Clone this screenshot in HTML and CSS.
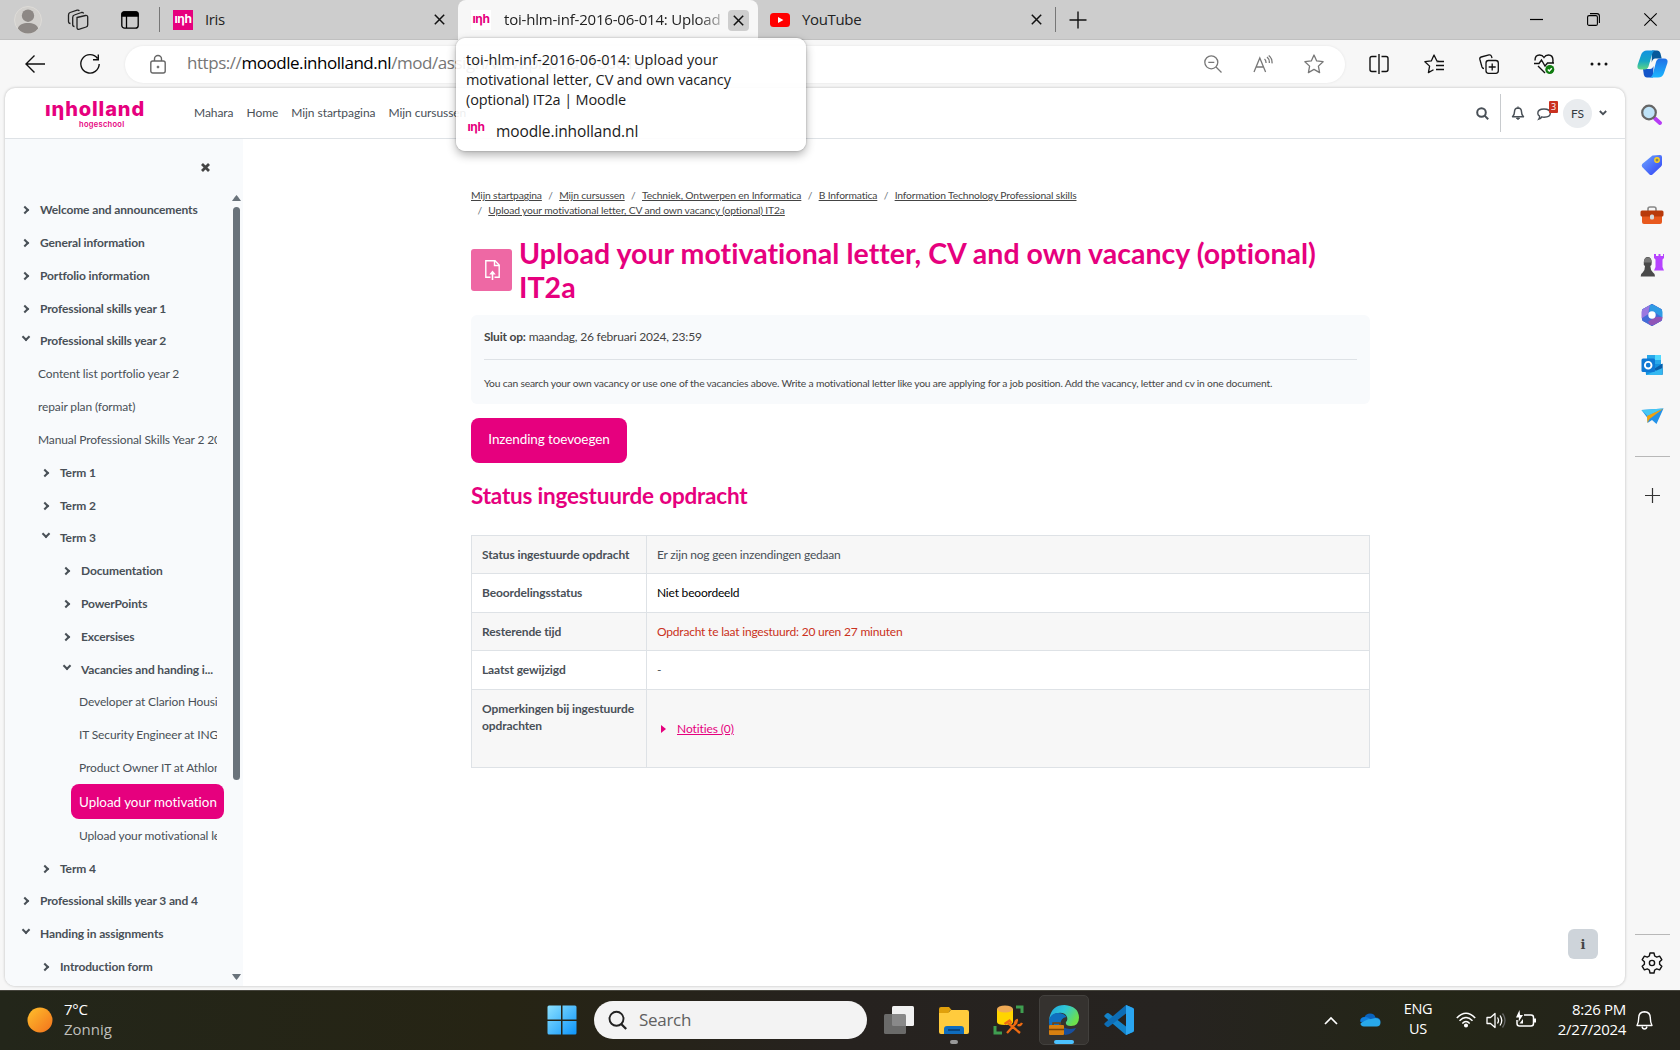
FILE: index.html
```html
<!DOCTYPE html>
<html lang="nl">
<head>
<meta charset="utf-8">
<title>toi-hlm-inf-2016-06-014: Upload your motivational letter</title>
<link rel="stylesheet" href="styles.css">
</head>
<body>
<div class="screen">
  <header class="tabs">
    <svg class="ic avatar" width="28" height="28" viewBox="0 0 28 28"><circle cx="14" cy="14" r="13.5" fill="#d2d0cd" stroke="#dedcd8"/><circle cx="14" cy="9.7" r="6.2" fill="#8d8885"/><path d="M3.8 22.500C5 18.500 9 17 14 17s9 1.500 10.200 5.500A13 13 0 0 1 3.800 22.500z" fill="#8d8885"/></svg>
    <svg class="ic spaces" width="22" height="22" viewBox="0 0 22 22" fill="none" stroke="#222" stroke-width="1.300"><path d="M10 8.500l8.500-2q2.200-.3 2.200 1.500v8q0 1.500-1.500 2l-6.700 2.200q-2.300.5-2.500-1.500z"/><path d="M7.500 17.500q-1.800 0-1.800-2V8.500q0-2 1.700-2.500l7-2.500q1.600-.4 2.200 1"/><path d="M3.500 14.500q-2 0-2-2V6q0-2 1.600-2.500l7-2.300q1.600-.4 2.200.8"/></svg>
    <svg class="ic tabact" width="18" height="18" viewBox="0 0 18 18" fill="none" stroke="#000" stroke-width="1.300"><rect x=".8" y=".8" width="16.400" height="16.400" rx="2.800"/><path d="M1 5V3q0-2 2-2h12q2 0 2 2v2z" fill="#000"/><path d="M5.500 5v12"/></svg>
    <i class="vline"></i>
    <span class="fav pink">ıηh</span>
    <span class="tabname iris">Iris</span>
    <svg class="ic closex" width="11" height="11" viewBox="0 0 11 11"><path d="M.8.8l9.400 9.400M10.200.8L.8 10.200" stroke="#111" stroke-width="1.500"/></svg>
    <div class="tab">
      <span class="fav white">ıηh</span>
      <span class="tabname fade">toi-hlm-inf-2016-06-014: Upload</span>
      <span class="closebtn"><svg width="11" height="11" viewBox="0 0 11 11"><path d="M.8.8l9.400 9.400M10.200.8L.8 10.200" stroke="#111" stroke-width="1.500"/></svg></span>
    </div>
    <svg class="ic yt" width="20" height="14" viewBox="0 0 20 14"><rect width="20" height="14" rx="3.500" fill="#f00"/><path d="M8 4l5.400 3L8 10z" fill="#fff"/></svg>
    <span class="tabname ytname">YouTube</span>
    <svg class="ic" width="11" height="11" viewBox="0 0 11 11"><path d="M.8.8l9.400 9.400M10.200.8L.8 10.200" stroke="#111" stroke-width="1.500"/></svg>
    <i class="vline second"></i>
    <svg class="ic plus" width="18" height="18" viewBox="0 0 18 18"><path d="M9 .5v17M.5 9h17" stroke="#111" stroke-width="1.400"/></svg>
    <div class="winctl">
      <svg width="13" height="13" viewBox="0 0 13 13"><path d="M0 6.500h13" stroke="#000" stroke-width="1.200"/></svg>
      <svg width="13" height="13" viewBox="0 0 13 13" fill="none" stroke="#000" stroke-width="1.100"><rect x=".6" y="2.600" width="9.800" height="9.800" rx="1.500"/><path d="M3 .6h7q2.400 0 2.400 2.400v7"/></svg>
      <svg width="13" height="13" viewBox="0 0 13 13"><path d="M.3.3l12.400 12.400M12.700.3L.3 12.700" stroke="#000" stroke-width="1.100"/></svg>
    </div>
  </header>

  <div class="toolbar">
    <svg class="back" width="20" height="18" viewBox="0 0 20 18" fill="none" stroke="#111" stroke-width="1.400"><path d="M20 9H1M9.500.5L1 9l8.500 8.500"/></svg>
    <svg class="reload" width="20" height="20" viewBox="0 0 20 20" fill="none" stroke="#111" stroke-width="1.400"><path d="M17.500 4.500A9.200 9.200 0 1 0 19.200 10M18.300.5v5.300h-5.300"/></svg>
    <div class="address">
      <svg class="lock" width="16" height="19" viewBox="0 0 16 19" fill="none" stroke="#666" stroke-width="1.400"><rect x=".8" y="6" width="14.400" height="12" rx="2"/><path d="M4.500 6V4a3.500 3.500 0 0 1 7 0v2"/><circle cx="8" cy="12" r="1" fill="#666" stroke-width=".8"/></svg>
      <span class="url">https://<b>moodle.inholland.nl</b>/mod/assign/view.php?id=1806155</span>
      <div class="addr-icons">
        <svg width="18" height="18" viewBox="0 0 18 18" fill="none" stroke="#777" stroke-width="1.300"><circle cx="7.300" cy="7.300" r="6.500"/><path d="M4.300 7.300h6M12 12l5.500 5.500"/></svg>
        <svg width="20" height="18" viewBox="0 0 20 18" fill="none" stroke="#777" stroke-width="1.300"><path d="M1 17L6.800 3 12.600 17M3 12h7.500M11.500 4q1.700 1.300 1.500 4M14 2q2.700 2.200 2.300 6M15.700.4q3.800 3 3.300 8"/></svg>
        <svg width="20" height="20" viewBox="0 0 20 20" fill="none" stroke="#777" stroke-width="1.300" stroke-linejoin="round"><path d="M10 1l2.700 5.900 6.400.8-4.700 4.400 1.200 6.500L10 15.400l-5.600 3.200 1.200-6.500L.9 7.700l6.400-.8z"/></svg>
      </div>
    </div>
    <div class="tools">
      <svg width="20" height="20" viewBox="0 0 20 20" fill="none" stroke="#111" stroke-width="1.400"><path d="M7.500 2.500H3q-2 0-2 2v11q0 2 2 2h4.500M12.500 2.500H17q2 0 2 2v11q0 2-2 2h-4.500M10 0v20"/></svg>
      <svg width="20" height="20" viewBox="0 0 20 20" fill="none" stroke="#111" stroke-width="1.300" stroke-linejoin="round"><path d="M12.800 6.800L10 1 7.300 6.900l-6.400.8 4.700 4.400-1.200 6.500L9.500 15.700M12.500 6.800l2 .3M12.500 7.500h7.500M12 11.500h8M12 15.500h8"/></svg>
      <svg width="20" height="20" viewBox="0 0 20 20" fill="none" stroke="#111" stroke-width="1.300"><rect x="7" y="6.500" width="12.300" height="12.800" rx="2.500"/><path d="M13.200 9.500v7M9.700 13h7M5 14.500q-1.500 0-2-1.500L.9 5.500q-.5-2 1.300-2.500L10 .9q1.900-.4 2.500 1.500l.5 1.700"/></svg>
      <svg width="20" height="20" viewBox="0 0 20 20" fill="none" stroke="#111" stroke-width="1.400"><path d="M1 6.500Q1 1 5.600 1 8.500 1 10 3.500 11.500 1 14.500 1 19 1 19 6.500q0 1.500-.5 2.500M0 9.500h5L7.500 6l3.500 6 2.500-3H20M4 12l7 7"/><circle cx="15.800" cy="15.500" r="4.500" fill="#107c10" stroke="none"/><path d="M13.800 15.500l1.500 1.500 2.500-2.800" stroke="#fff"/></svg>
      <svg width="20" height="20" viewBox="0 0 20 20" fill="#111"><circle cx="3" cy="10" r="1.500"/><circle cx="10" cy="10" r="1.500"/><circle cx="17" cy="10" r="1.500"/></svg>
      <svg class="copilot" width="31" height="28" viewBox="0 0 31 28"><defs><linearGradient id="ca" x1="0" y1="0" x2="0" y2="1"><stop offset="0" stop-color="#1292e0"/><stop offset=".55" stop-color="#16a6c6"/><stop offset="1" stop-color="#5fd782"/></linearGradient><linearGradient id="cb" x1="0" y1="0" x2="0" y2="1"><stop offset="0" stop-color="#1f6fe6"/><stop offset="1" stop-color="#1cb6ff"/></linearGradient></defs><path d="M15 .5h5q2.500 0 3.500 3l1.200 5h-6.500q-2.500 0-3.500 4z" fill="#07599b"/><path d="M16 27.500h-6q-2.500 0-3.200-3L6 19h7q2.500 0 3.500-3z" fill="#1355c9"/><path d="M10 .5h9q-3 0-4 4l-3.500 12q-1 3-4 3H4Q-.5 19.500.6 15L4 5q1.500-4.500 6-4.500z" fill="url(#ca)"/><path d="M21 27.500h-9q3 0 4-4l3-11.500q1-3.500 4-3.500h4q4.500 0 3.400 4.500L27 23q-1.500 4.500-6 4.500z" fill="url(#cb)"/></svg>
    </div>
  </div>

  <div class="middle">
    <div class="page">
      <div class="site-head">
        <div class="logo"><span class="word">ıηholland</span><span class="sub">hogeschool</span></div>
        <nav class="topnav"><a>Mahara</a><a>Home</a><a>Mijn startpagina</a><a>Mijn cursussen</a></nav>
        <div class="usernav">
          <svg class="s" width="13" height="13" viewBox="0 0 13 13" fill="none" stroke="#495057" stroke-width="2"><circle cx="5.500" cy="5.500" r="4.300"/><path d="M8.600 8.600l3.600 3.600"/></svg>
          <i class="sep"></i>
          <svg class="bell" width="14" height="14" viewBox="0 0 14 14"><path d="M1.500 10.700q2-1.700 2-4.900 0-3.600 3.500-3.800 3.500.2 3.500 3.800 0 3.200 2 4.900z" fill="none" stroke="#495057" stroke-width="1.500" stroke-linejoin="round"/><path d="M7 .3v1.500M5.500 12h3q-.3 1.300-1.500 1.300T5.500 12z" stroke="#495057" fill="#495057"/></svg>
          <span class="chat"><svg width="15" height="13" viewBox="0 0 15 13" fill="none" stroke="#495057" stroke-width="1.400"><path d="M4.800 9.800q-1 1.800-3 2.400 1-1.500.8-3Q.8 8 .8 6.300.8 2 7 2t6.300 4.200Q13.300 10 7 10.200q-1.200 0-2.200-.4z"/></svg><em>3</em></span>
          <span class="fs">FS</span>
          <svg class="dn" width="8" height="6" viewBox="0 0 8 6" fill="none" stroke="#495057" stroke-width="1.800"><path d="M.8 1L4 4.200 7.200 1"/></svg>
        </div>
      </div>
      <div class="page-body">
        <aside class="index">
          <div class="index-close"><svg width="9" height="9" viewBox="0 0 9 9"><path d="M1 1l7 7M8 1L1 8" stroke="#444" stroke-width="2.800"/></svg></div>
          <ul class="tree">
            <li class="b"><i class="c"></i>Welcome and announcements</li>
            <li class="b"><i class="c"></i>General information</li>
            <li class="b"><i class="c"></i>Portfolio information</li>
            <li class="b"><i class="c"></i>Professional skills year 1</li>
            <li class="b"><i class="c d"></i>Professional skills year 2</li>
            <li class="l1"><span>Content list portfolio year 2</span></li>
            <li class="l1"><span>repair plan (format)</span></li>
            <li class="l1"><span>Manual Professional Skills Year 2 20</span></li>
            <li class="b b2"><i class="c"></i>Term 1</li>
            <li class="b b2"><i class="c"></i>Term 2</li>
            <li class="b b2"><i class="c d"></i>Term 3</li>
            <li class="b b3"><i class="c"></i>Documentation</li>
            <li class="b b3"><i class="c"></i>PowerPoints</li>
            <li class="b b3"><i class="c"></i>Excersises</li>
            <li class="b b3"><i class="c d"></i>Vacancies and handing i...</li>
            <li class="l3"><span>Developer at Clarion Housi</span></li>
            <li class="l3"><span>IT Security Engineer at ING</span></li>
            <li class="l3"><span>Product Owner IT at Athlon</span></li>
            <li class="l3 on"><span>Upload your motivation</span></li>
            <li class="l3"><span>Upload your motivational le</span></li>
            <li class="b b2"><i class="c"></i>Term 4</li>
            <li class="b"><i class="c"></i>Professional skills year 3 and 4</li>
            <li class="b"><i class="c d"></i>Handing in assignments</li>
            <li class="b b2"><i class="c"></i>Introduction form</li>
          </ul>
          <div class="scroll"><svg width="9" height="6" viewBox="0 0 9 6"><path d="M4.500 0Q6 1.500 9 6H0Q3 1.500 4.500 0z" fill="#6a737b"/></svg><i></i><svg width="9" height="6" viewBox="0 0 9 6"><path d="M4.500 6Q6 4.500 9 0H0Q3 4.500 4.500 6z" fill="#6a737b"/></svg></div>
        </aside>
        <main class="main">
          <div class="crumbs"><a>Mijn startpagina</a><s>/</s><a>Mijn cursussen</a><s>/</s><a>Techniek, Ontwerpen en Informatica</a><s>/</s><a>B Informatica</a><s>/</s><a>Information Technology Professional skills</a></div>
          <div class="crumbs two"><s>/</s><a>Upload your motivational letter, CV and own vacancy (optional) IT2a</a></div>
          <div class="title">
            <span class="act"><svg width="15" height="20" viewBox="0 0 15 20" fill="none" stroke="#fff" stroke-width="1.400"><path d="M5.500 17.300H.8V.8H10l4.200 4.200v12.300H9.500"/><path d="M9.500.8v4.700h4.700"/><path d="M7.500 20v-8" stroke-width="1.600"/><path d="M4.300 14.500L7.500 10.500l3.200 4z" fill="#fff" stroke="none"/></svg></span>
            <h1>Upload your motivational letter, CV and own vacancy (optional)<br>IT2a</h1>
          </div>
          <section class="info"><p class="due"><b>Sluit op:</b> maandag, 26 februari 2024, 23:59</p><p class="desc">You can search your own vacancy or use one of the vacancies above. Write a motivational letter like you are applying for a job position. Add the vacancy, letter and cv in one document.</p></section>
          <button class="add">Inzending toevoegen</button>
          <h2>Status ingestuurde opdracht</h2>
          <table class="status">
            <tr class="g r38"><th>Status ingestuurde opdracht</th><td>Er zijn nog geen inzendingen gedaan</td></tr>
            <tr class="r39"><th>Beoordelingsstatus</th><td class="black">Niet beoordeeld</td></tr>
            <tr class="g r38"><th>Resterende tijd</th><td class="red">Opdracht te laat ingestuurd: 20 uren 27 minuten</td></tr>
            <tr class="r39"><th>Laatst gewijzigd</th><td>-</td></tr>
            <tr class="g r78"><th>Opmerkingen bij ingestuurde opdrachten</th><td class="notes"><svg width="5" height="8" viewBox="0 0 5 8"><path d="M0 0l5 4-5 4z" fill="#e6007e"/></svg><a>Notities (0)</a></td></tr>
          </table>
        </main>
        <span class="help">i</span>
      </div>
    </div>

    <aside class="dock">
      <svg width="22" height="22" viewBox="0 0 22 22"><path d="M14 14.500l5 4.500" stroke="#b63cf5" stroke-width="4" stroke-linecap="round"/><circle cx="8" cy="8.500" r="6.800" fill="#bfe3f8" stroke="#666" stroke-width="2.200"/></svg>
      <svg width="22" height="22" viewBox="0 0 22 22"><defs><linearGradient id="tg" x1="0" y1="0" x2="1" y2="1"><stop offset="0" stop-color="#6fa8ff"/><stop offset="1" stop-color="#2f3ff5"/></linearGradient></defs><path d="M11.500 1.500l7.500-.5q2 0 2 2v7.500q0 1-1 2L11.500 20.500q-1.500 1-3 0L1.200 13q-1-1.500 0-3z" fill="url(#tg)"/><circle cx="16" cy="6" r="2.200" fill="#8a8a5c" stroke="#ffd21c" stroke-width="1.400"/></svg>
      <svg width="24" height="22" viewBox="0 0 24 22"><path d="M8 7V5q0-2 2-2h4q2 0 2 2v2" fill="none" stroke="#888" stroke-width="1.600"/><path d="M2 11h20v7q0 2-2 2H4q-2 0-2-2z" fill="#e8591e"/><rect x=".5" y="6.500" width="23" height="6" rx="1.500" fill="#b83a0b"/><rect x="10" y="10.500" width="4" height="5" rx="1.500" fill="#d5dade"/></svg>
      <svg width="24" height="22" viewBox="0 1 24 22"><path d="M14 1h2v2h2.500V1h2v2H23V1h1v4l-1.500 1.500V14l1.500 3.500H14L15.500 14V6.500L14 5z" fill="#b643ff"/><path d="M5 13q-1.800-1-1.200-3.500Q4 4 7.700 4q4 0 4 5.500Q12 12 10.300 13q.2 4.500 2.700 6.500 2 .8 2 4H.7q0-3.200 2-4Q5 17.500 5 13z" fill="#4a4a4a"/><path d="M3.800 9.500Q4 4.500 7.700 4.500q3.500 0 3.900 5z" fill="#777"/></svg>
      <svg width="22" height="22" viewBox="0 0 22 22"><path d="M11 .3l9.500 5.300v10.800L11 21.700l-9.500-5.300V5.600z" fill="#446bd6" stroke="#446bd6" stroke-linejoin="round"/><path d="M9 1.300Q11-.3 13 1.300l6.500 3.500q2 1 2 3.200v5.500L14.500 9 11 7.200 8 9z" fill="#2f9be4"/><path d="M9 1.300L2.500 4.800Q.5 6 .5 8v6.500L7.500 10 8 5z" fill="#9a78e0"/><path d="M21.500 13v1q0 2.200-2 3.300L13 20.700q-2 1.200-4 0l-2-3 4-2.700 3.500-2z" fill="#9055b8"/><circle cx="11" cy="11" r="3.700" fill="#fff"/></svg>
      <svg width="22" height="22" viewBox="0 0 22 22"><path d="M6 1h14v10H6z" fill="#28a8ea"/><path d="M14 1h6v5h-6z" fill="#50d9ff"/><path d="M4 10h17.500v9.500q0 1.500-1.500 1.500H5z" fill="#1490df"/><path d="M21.500 9.500V21L13 15z" fill="#0a5ea8"/><path d="M5 21l16.500-7V20q0 1-1.500 1z" fill="#35b8f1"/><rect x=".5" y="4.500" width="13.500" height="13.500" rx="1.500" fill="#0f78d4"/><circle cx="7.200" cy="11.200" r="3.300" fill="none" stroke="#fff" stroke-width="1.900"/></svg>
      <svg width="23" height="20" viewBox="0 0 23 20"><path d="M.5 4L22.500 2.500 15.500 18l-4.500-4-4.500 3V12z" fill="#2492e8"/><path d="M.5 4L22.500 2.500 6.500 10z" fill="#47c8f4"/><path d="M6 10L22.500 2.500 8.500 13 6.500 17z" fill="#f0a20e"/></svg>
      <i class="rule"></i>
      <svg class="add2" width="15" height="15" viewBox="0 0 15 15"><path d="M7.500 0v15M0 7.500h15" stroke="#333" stroke-width="1.200"/></svg>
      <i class="rule low"></i>
      <svg class="gear" width="22" height="22" viewBox="0 0 22 22" fill="none" stroke="#111" stroke-width="1.400" stroke-linejoin="round"><path d="M9 1h4l.7 3 2 1.100L18.600 4.200l2.200 3.500-2.200 2.100v2.400l2.200 2.100-2.200 3.500-2.900-.9-2 1.100-.7 3H9l-.7-3-2-1.100-2.900.9-2.200-3.500 2.200-2.100V9.800L1.200 7.700l2.200-3.500 2.900.9L8.300 4z"/><circle cx="11" cy="11" r="2.600"/></svg>
    </aside>
  </div>

  <footer class="taskbar">
    <svg class="sun" width="26" height="26" viewBox="0 0 26 26"><defs><linearGradient id="sg" x1="0" y1="0" x2="1" y2="1"><stop offset="0" stop-color="#ffc02c"/><stop offset="1" stop-color="#f2711c"/></linearGradient></defs><circle cx="13" cy="13" r="12.500" fill="url(#sg)"/></svg>
    <div class="weather"><span>7°C</span><span class="dim">Zonnig</span></div>
    <svg class="start" width="30" height="30" viewBox="0 0 30 30"><defs><linearGradient id="wg" gradientUnits="userSpaceOnUse" x1="0" y1="0" x2="30" y2="30"><stop offset="0" stop-color="#8fe3ff"/><stop offset="1" stop-color="#0a93fa"/></linearGradient></defs><path d="M2 .5h12v14H.5V2Q.5.500 2 .500zM15.500.5H28q1.500 0 1.500 1.500v12.500h-14zM.5 16H14v13.500H2q-1.500 0-1.500-1.500zM15.500 16h14v12q0 1.500-1.500 1.500H15.500z" fill="url(#wg)"/></svg>
    <div class="search"><svg width="19" height="19" viewBox="0 0 19 19" fill="none" stroke="#222" stroke-width="1.900"><circle cx="8.500" cy="7.800" r="7"/><path d="M13.200 13l5 5" stroke-width="2.300"/></svg><span>Search</span></div>
    <div class="apps">
      <span class="app"><svg width="30" height="30" viewBox="0 0 30 30"><rect x="8" y="1" width="22" height="20" rx="1.500" fill="#f1f1f1"/><rect x="0" y="9" width="22" height="20" rx="1.500" fill="#777" fill-opacity=".85"/></svg></span>
      <span class="app"><svg width="30" height="30" viewBox="0 0 30 30"><path d="M0 4q0-2 2-2h8l3 3.500h-2L9 9H0z" fill="#e0a00c"/><path d="M0 8h9l3-3h16q2 0 2 2v20q0 2-2 2H2q-2 0-2-2z" fill="#ffcb3d"/><path d="M5 29v-5q0-3 3-3h14q3 0 3 3v5z" fill="#0f6cbd"/><path d="M9 25h12" stroke="#083b6e" stroke-width="1.600"/></svg><i class="run"></i></span>
      <span class="app"><svg width="30" height="30" viewBox="0 0 30 30"><path d="M3 4v13q0 3 8 3t8-3V4z" fill="#ffd400"/><ellipse cx="11" cy="4" rx="8" ry="3.500" fill="#efaa55"/><path d="M22 2h6v6M1 21v7h7" stroke="#3f9e50" stroke-width="3" fill="none"/><path d="M13 28l10-11M14 18l12 10M10.500 19l5-3.500 2 2.500M21 19.500q0-4 3-4.500M23.500 20q3 1 4.500-2" stroke="#ef6b12" stroke-width="2.300" fill="none"/></svg></span>
      <span class="app active"><svg width="30" height="30" viewBox="0 0 30 30"><defs><linearGradient id="eg" x1="0" y1="0" x2="1" y2=".5"><stop offset="0" stop-color="#1fa3e0"/><stop offset=".5" stop-color="#2fc7d6"/><stop offset="1" stop-color="#6de04c"/></linearGradient></defs><path d="M0 15Q2 0 15.500 0 29.500 1 30 12.500 30 21 22 21q-6 0-5-4 2-2 1-5Q16 7 9 8 3 9 0 15z" fill="url(#eg)"/><path d="M0 15q2-7 9-7 6 0 8.500 4-6 1-6 7 0 8 8.500 8-4 3-8 2Q-1 27 0 15z" fill="#0f6fbf"/><path d="M12 19q3 7 15 4-3 6-11 7-5-3-4-11z" fill="#174f9e"/><rect y="20" width="15" height="10" rx="1" fill="#d98010"/><path d="M4 20v-2h7v2M0 24.500h15" stroke="#7a4204" stroke-width="1.500" fill="none"/></svg><i class="run blue"></i></span>
      <span class="app"><svg width="30" height="30" viewBox="0 0 30 30"><path d="M22 0l7 3q1 .5 1 2v20q0 1.500-1 2l-7 3L.8 12q-1-1 0-2l2-1.800q1-.6 2 0L22 21.500z" fill="#1483c9"/><path d="M22 0L.8 18q-1 1 0 2l2 1.800q1 .6 2 0L22 8.500z" fill="#0d6db5"/><path d="M22 0l7 3q1 .5 1 2v20q0 1.500-1 2l-7 3z" fill="#2aa5f0"/></svg></span>
    </div>
    <div class="tray">
      <svg class="up" width="14" height="9" viewBox="0 0 14 9" fill="none" stroke="#fff" stroke-width="1.700"><path d="M1 8l6-6 6 6"/></svg>
      <svg class="cloud" width="21" height="14" viewBox="0 0 21 14"><path d="M4 10Q0 10 .2 7 1 4 4.500 4 6 .5 10 .5q4.500 0 5.500 4 4.500 0 5 4z" fill="#0a63bd"/><path d="M.5 9Q0 4.500 5 4q4 0 5.500 2.500Z" fill="#1080de"/><path d="M4 13.500q-3.500-.5-3.500-3Q6 6 11 6l4.500-1q5 .5 5 4.500 0 4-4 4z" fill="#28a8ea"/></svg>
      <div class="lang"><span>ENG</span><span>US</span></div>
      <svg class="wifi" width="20" height="16" viewBox="0 0 20 16" fill="none" stroke="#fff" stroke-width="1.500"><path d="M.8 6Q10-3.500 19.200 6M3.500 8.800q6.500-6.500 13 0M6.300 11.500q3.700-3.800 7.400 0"/><circle cx="10" cy="13.500" r="1.300" fill="#fff"/></svg>
      <svg class="vol" width="20" height="17" viewBox="0 0 20 17" fill="none" stroke="#fff" stroke-width="1.300"><path d="M1 5.500h3.500L9 1.500v14l-4.500-4H1z" stroke-linejoin="round"/><path d="M11.500 5.500q2 3 0 6M14 3.500q3.500 5 0 10"/><path d="M16.500 1.500q5 7 0 14" stroke="#666"/></svg>
      <svg class="bat" width="20" height="18" viewBox="0 0 20 18" fill="none" stroke="#fff" stroke-width="1.500"><path d="M8 4h7q2.500 0 2.500 2.500v6Q17.500 15 15 15H3.500Q1 15 1 12.500V9"/><path d="M19 7.500v4" stroke-width="2"/><path d="M3.500-1L0 6.500h3L2.500 11 7 4H4z" fill="#fff" stroke="none"/><path d="M3.500 12.500L7 8v4.500z" fill="#fff" stroke="none"/></svg>
      <div class="clock"><span>8:26 PM</span><span>2/27/2024</span></div>
      <svg class="nbell" width="17" height="19" viewBox="0 0 17 19" fill="none" stroke="#fff" stroke-width="1.400"><path d="M1 14.500q1.700-3 1.700-7.500 0-6 5.800-6.200Q14.300 1 14.300 7q0 4.500 1.700 7.500z" stroke-linejoin="round"/><path d="M6 15.500q.5 2.500 2.500 2.500t2.500-2.500"/></svg>
    </div>
  </footer>

  <div class="tip">
    <p><span class="wide">toi-hlm-inf-2016-06-014: Upload your</span><br>motivational letter, CV and own vacancy<br><span class="wide2">(optional) IT2a | Moodle</span></p>
    <div class="tip-host"><span class="fav clear">ıηh</span><span>moodle.inholland.nl</span></div>
  </div>
</div>
</body>
</html>
```
FILE: styles.css
```css
* { box-sizing: border-box; }
body { margin: 0; font-family: "Open Sans", "Noto Sans", sans-serif; color: #1b1b1b; }
p, h1, h2, ul { margin: 0; padding: 0; }
svg { display: block; flex: none; overflow: visible; }
i { display: block; flex: none; }
.screen { position: relative; width: 1680px; height: 1050px; overflow: hidden; display: flex; flex-direction: column; background: #f7f7f7; }

/* tab strip */
.tabs { height: 40px; flex: none; display: flex; align-items: center; background: #cdcdcd; border-bottom: 1px solid #c0c0c0; padding-left: 14px; }
.spaces { margin-left: 25px; }
.tabact { margin-left: 32px; }
.vline { width: 1px; height: 25px; background: #777; margin-left: 20px; }
.fav { flex: none; width: 20px; height: 20px; font: 700 12px/17px "Inter", sans-serif; letter-spacing: -.4px; text-align: center; color: #e6007e; }
.fav.pink { background: #e6007e; color: #fff; margin-left: 13px; }
.fav.white { background: #fff; margin-left: 13px; }
.tabname { font-size: 15px; line-height: 20px; height: 22px; letter-spacing: -.35px; white-space: nowrap; color: #222; }
.iris { width: 229px; margin-left: 12px; }
.tab { width: 300px; height: 40px; align-self: flex-start; margin-left: 13px; display: flex; align-items: center; background: #f7f7f7; border-radius: 8px 8px 0 0; }
.fade { width: 219px; margin: 0 -2px 0 13px; overflow: hidden; letter-spacing: -.2px; mask-image: linear-gradient(90deg, #000 88%, rgba(0,0,0,.25)); }
.closebtn { width: 21px; height: 21px; margin-left: 7px; display: flex; align-items: center; justify-content: center; background: #cecece; border-radius: 4px; }
.yt { margin-left: 12px; }
.ytname { width: 229px; margin-left: 12px; }
.vline.second { margin-left: 13px; }
.plus { margin-left: 13px; }
.winctl { margin-left: auto; display: flex; gap: 44px; padding-right: 23px; }

/* toolbar */
.toolbar { height: 48px; flex: none; display: flex; align-items: center; padding: 0 0 0 25px; }
.toolbar > * { flex: none; }
.reload { margin-left: 35px; }
.address { width: 1220px; height: 37px; margin-left: 25px; display: flex; align-items: center; background: #fff; border-radius: 19px; padding: 0 21px 0 25px; box-shadow: 0 0 3px rgba(0,0,0,.08); }
.url { font-size: 17px; line-height: 24px; height: 26px; margin-left: 21px; color: #767676; white-space: nowrap; letter-spacing: -.45px; }
.url b { font-weight: 400; color: #000; }
.addr-icons { margin-left: auto; display: flex; align-items: center; gap: 31px; }
.tools { margin-left: 24px; display: flex; align-items: center; gap: 35px; }
.copilot { margin-left: -7px; }

/* web page */
.middle { height: 902px; flex: none; display: flex; }
.page { width: 1620px; height: 898px; margin-left: 5px; background: #fff; border-radius: 10px; overflow: hidden; box-shadow: 0 0 3px rgba(0,0,0,.25); display: flex; flex-direction: column; font-family: "Lato", sans-serif; color: #495057; font-size: 12px; letter-spacing: -.13px; font-variant-ligatures: none; }
.site-head { height: 51px; flex: none; border-bottom: 1px solid #dee2e6; display: flex; align-items: center; padding-left: 40px; }
.logo { width: 101px; height: 32px; display: flex; flex-direction: column; color: #e6007e; font-family: "Inter", sans-serif; }
.word { font-size: 20px; font-weight: 800; line-height: 24px; height: 23px; letter-spacing: .9px; white-space: nowrap; }
.sub { font-size: 7.5px; font-weight: 600; line-height: 9px; padding-left: 34px; letter-spacing: .3px; }
.topnav { display: flex; gap: 13px; margin-left: 48px; line-height: 16px; white-space: nowrap; letter-spacing: -.06px; }
.usernav { margin-left: auto; height: 50px; display: flex; align-items: center; padding-right: 18px; }
.sep { width: 1px; height: 38px; background: #c8cbce; margin-left: 11px; }
.bell { margin-left: 10px; }
.chat { position: relative; margin-left: 12px; }
.chat em { position: absolute; left: 12px; top: -6px; width: 9px; height: 12px; background: #ca3120; color: #fff; font: 400 9px/12px "Open Sans", sans-serif; letter-spacing: 0; text-align: center; border-radius: 1px; }
.fs { width: 29px; height: 29px; line-height: 30px; margin-left: 11px; border-radius: 50%; background: #e9ecef; text-align: center; color: #343a40; }
.dn { margin-left: 7px; }

.page-body { position: relative; flex: 1; display: flex; min-height: 0; }
.index { position: relative; width: 238px; flex: none; background: #f8fafc; overflow: hidden; }
.index-close { padding: 24px 0 0 196px; height: 54.800px; }
.tree { list-style: none; }
.tree li { height: 32.820px; display: flex; align-items: center; white-space: nowrap; line-height: 16px; }
.tree .b { font-weight: 700; padding-left: 17px; }
.tree .b2 { padding-left: 37px; }
.tree .b3 { padding-left: 58px; }
.c { width: 6px; height: 6px; border: solid #495057; border-width: 2px 2px 0 0; transform: rotate(45deg); margin-right: 12px; }
.c.d { transform: translate(1px, -4px) rotate(135deg); }
.tree .l1 { padding-left: 33px; }
.tree .l3 { padding-left: 74px; }
.tree li span { overflow: hidden; width: 179px; height: 18px; line-height: 18px; }
.tree .l3 span { width: 138px; }
.tree .on { height: 35px; width: 153px; margin-left: 66px; padding-left: 8px; background: #e6007e; border-radius: 8px; color: #fff; font-size: 13.400px; letter-spacing: 0; }
.scroll { position: absolute; right: 2px; top: 56px; bottom: 6px; width: 9px; display: flex; flex-direction: column; align-items: center; }
.scroll i { width: 7px; height: 573px; border-radius: 4px; background: #6a737b; margin: 6px 0 auto; }

.main { width: 899px; margin-left: 228px; padding-top: 49px; }
.crumbs { display: flex; height: 15px; line-height: 15px; font-size: 10.300px; letter-spacing: -.14px; white-space: nowrap; }
.crumbs a { text-decoration: underline; color: #444; text-underline-offset: 1px; }
.crumbs s { text-decoration: none; padding: 0 6.400px; color: #6c757d; }
.title { display: flex; align-items: center; margin-top: 14px; height: 76px; }
.act { width: 41px; height: 42px; background: #ee68a4; border-radius: 3px; display: flex; align-items: center; justify-content: center; margin-right: 7px; }
.act svg { margin-left: 1px; }
h1 { flex: 1; font-size: 28.500px; line-height: 34px; font-weight: 700; color: #e6007e; letter-spacing: .03px; white-space: nowrap; }
.info { margin-top: 7px; height: 89px; padding: 0 13px; background: #f8fafc; border-radius: 6px; color: #444; letter-spacing: -.19px; }
.due { height: 45px; line-height: 43px; border-bottom: 1px solid #dee2e6; }
.desc { font-size: 10.300px; line-height: 46px; white-space: nowrap; }
.add { display: block; margin-top: 14px; width: 156px; height: 45px; padding: 0 0 4px; border: 0; border-radius: 8px; background: #e6007e; color: #fff; font: 400 13.500px "Lato", sans-serif; letter-spacing: -.1px; }
h2 { margin-top: 19px; font-size: 22.500px; line-height: 28px; font-weight: 700; color: #e6007e; letter-spacing: -.2px; }
.status { margin-top: 25px; width: 899px; border-collapse: collapse; table-layout: fixed; line-height: 17px; letter-spacing: -.2px; }
.status th, .status td { border: 1px solid #dee2e6; padding: 10px 10px 0; vertical-align: top; text-align: left; }
.status th { width: 175px; letter-spacing: -.11px; }
.g { background: #f7f7f7; }
.r38 { height: 38px; }
.r39 { height: 39px; }
.r78 { height: 78px; }
.black { color: #000; }
.red { color: #ca3120; }
.status .notes { padding: 30px 0 0 14px; color: #e6007e; letter-spacing: -.1px; }
.notes svg { display: inline-block; margin-right: 11px; }
.notes a { text-decoration: underline; }
.help { position: absolute; right: 27px; bottom: 27px; width: 30px; height: 30px; border-radius: 6px; background: #ced4da; font: 700 13px/31px "DejaVu Serif", serif; text-align: center; color: #444; }

/* edge side bar */
.dock { flex: 1; display: flex; flex-direction: column; align-items: center; padding: 16px 1px 0 0; }
.dock > svg { height: 22px; margin-bottom: 28.100px; }
.dock .rule { width: 35px; height: 1px; background: #b8b8b8; margin-top: 1px; }
.dock > .add2 { height: 15px; margin: 31px 0 0; }
.dock .rule.low { margin-top: auto; }
.dock > .gear { margin: 17px 0 16px; }

/* taskbar */
.taskbar { height: 60px; flex: none; display: flex; align-items: center; padding-bottom: 1px; color: #fff; font-size: 15px; line-height: 20px; letter-spacing: -.3px; border-top: 1px solid #45443c; background: linear-gradient(90deg, #23261a, #262414 30%, #26221f 50%, #262320 70%, #242617 85%, #24231b); }
.sun { margin-left: 27px; }
.weather { display: flex; flex-direction: column; width: 80px; margin-left: 11px; padding-bottom: 3px; }
.dim { color: #bfbfbb; letter-spacing: 0; }
.start { margin-left: 403px; }
.search { width: 273px; height: 38px; margin-left: 17px; border-radius: 19px; background: #f3f3f3; display: flex; align-items: center; padding-left: 14px; color: #606060; font-size: 17px; }
.search span { margin-left: 12px; }
.apps { display: flex; gap: 5px; margin-left: 7px; }
.app { position: relative; width: 50px; height: 50px; border-radius: 5px; display: flex; align-items: center; justify-content: center; }
.app.active { background: #35322f; border: 1px solid #42403d; }
.run { position: absolute; bottom: 1px; width: 8px; height: 4px; border-radius: 2px; background: #999; }
.run.blue { width: 20px; background: #4cc2ff; bottom: 0; }
.tray { margin-left: auto; display: flex; align-items: center; padding-right: 27px; }
.cloud { margin-left: 22px; }
.lang { display: flex; flex-direction: column; align-items: center; width: 40px; margin: 0 18px 0 17px; font-size: 14.500px; padding-bottom: 2px; }
.vol { margin-left: 10px; }
.bat { margin-left: 10px; }
.clock { display: flex; flex-direction: column; align-items: flex-end; width: 80px; margin: 0 10px 0 10px; padding-bottom: 3px; }

/* tab hover card */
.tip { position: absolute; left: 456px; top: 38px; width: 350px; height: 113px; border-radius: 9px; background: rgba(255,255,255,.9); box-shadow: 0 4px 10px rgba(0,0,0,.3), 0 0 2px rgba(0,0,0,.3); padding: 12px 10px; font-size: 14.500px; line-height: 20px; letter-spacing: -.11px; white-space: nowrap; }
.wide { letter-spacing: .06px; }
.wide2 { letter-spacing: -.13px; }
.tip-host { display: flex; margin-top: 11px; font-size: 15.500px; }
.tip-host .fav { margin: -3px 10px 0 0; }
```
